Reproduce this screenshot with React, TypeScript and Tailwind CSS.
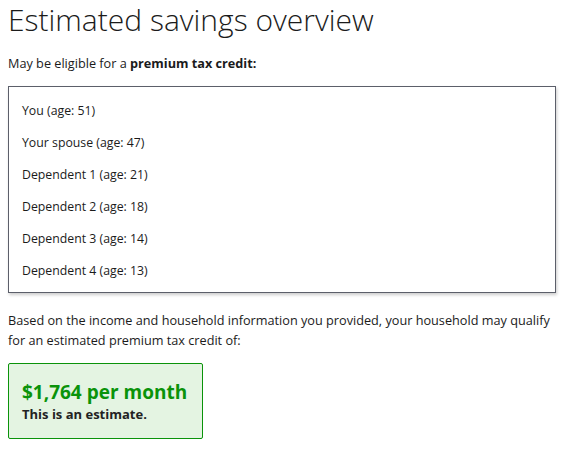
const people = [
  "You (age: 51)",
  "Your spouse (age: 47)",
  "Dependent 1 (age: 21)",
  "Dependent 2 (age: 18)",
  "Dependent 3 (age: 14)",
  "Dependent 4 (age: 13)",
];

export default function App() {
  return (
    <div
      className="px-2 pt-0 text-[#1b1b1b] bg-white min-h-screen"
      style={{ fontFamily: '"Open Sans", sans-serif' }}
    >
      <h1 className="text-[30px] font-light leading-[40px] text-[#1b1b1b]">
        Estimated savings overview
      </h1>
      <p className="mt-[13px] text-[12.7px] leading-[20px]">
        May be eligible for a <span className="font-bold">premium tax credit:</span>
      </p>

      <div className="mt-[13px] border border-[#5c5f6a] shadow-[1px_2px_3px_rgba(0,0,0,0.2)] px-[13px] pt-[14px] pb-[11px] w-[548px]">
        {people.map((p) => (
          <p key={p} className="text-[12.3px] leading-[20px] mb-[12px] last:mb-0">
            {p}
          </p>
        ))}
      </div>

      <p className="mt-[17px] text-[12.7px] leading-[20px]">
        Based on the income and household information you provided, your household may qualify
        for an estimated premium tax credit of:
      </p>

      <div className="mt-[13px] w-[195px] rounded-[2px] border border-[#0a930a] bg-[#e4f4e2] px-[13px] pt-[15px] pb-[15px]">
        <p className="text-[19px] font-bold leading-[26px] text-[#0a930a]">$1,764 per month</p>
        <p className="text-[13px] font-bold leading-[18px] text-[#222]">This is an estimate.</p>
      </div>
    </div>
  );
}
